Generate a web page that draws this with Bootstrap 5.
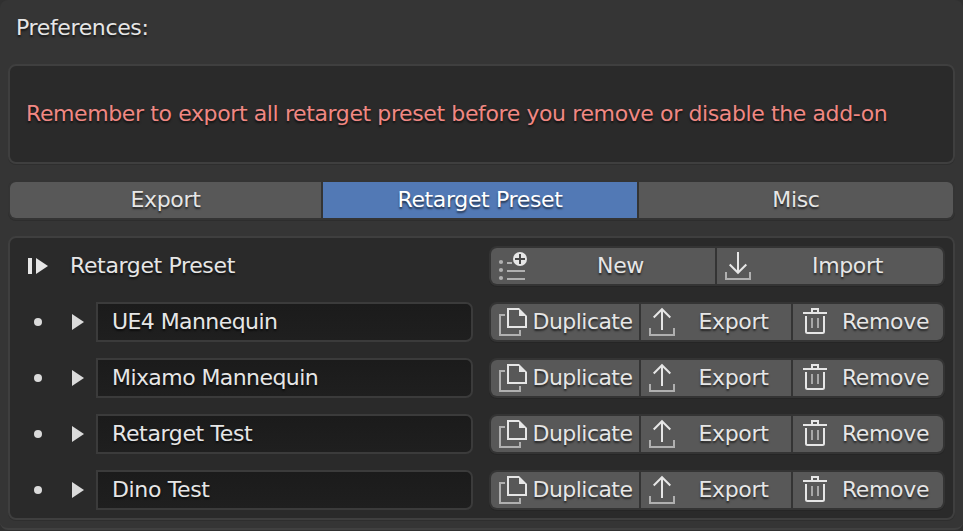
<!DOCTYPE html>
<html lang="en" data-bs-theme="dark">
<head>
<meta charset="utf-8">
<meta name="viewport" content="width=device-width, initial-scale=1">
<title>Preferences</title>
<link href="https://cdn.jsdelivr.net/npm/bootstrap@5.3.0/dist/css/bootstrap.min.css" rel="stylesheet">
<style>
  html, body { height: 100%; }
  body {
    background: #303030; color: #e6e6e6; overflow: hidden;
    font-family: "DejaVu Sans", sans-serif; font-size: 22px; line-height: 36px; letter-spacing: -.36px;
    text-shadow: 0 2px 2px rgba(0,0,0,.6);
  }
  .prefs { height: 530px; padding: 0 8px; background: #353535; border-bottom: 2px solid #404040; border-radius: 8px; }
  .prefs-title { height: 64px; padding: 10px 8px 0; font-size: inherit; font-weight: 400; line-height: 36px; color: inherit; }
  .panel { background: #2a2a2a; border: 2px solid #3f3f3f; border-radius: 8px; box-shadow: 0 1px 0 #2e2e2e; }
  .notice { height: 100px; padding: 0 16px; color: #f18883; letter-spacing: -.388px; white-space: nowrap; }
  .strip { background: #343434; border: 2px solid #343434; border-radius: 8px; gap: 2px; box-shadow: 0 1px 0 #252525; }
  .tool {
    height: 36px; padding: 0; border: 0; border-radius: 0; background: #585858; color: #e6e6e6;
    font-size: inherit; line-height: 35px; letter-spacing: -.35px; text-shadow: inherit; white-space: nowrap;
  }
  .tool:hover { background: #656565; color: #fff; }
  .tool:first-child { border-radius: 6px 0 0 6px; }
  .tool:last-child { border-radius: 0 6px 6px 0; }
  .tool.current { background: #5279b5; color: #fff; }
  .tabs { margin: 16px 0; box-shadow: 0 1px 0 #2d2d2d; }
  .tab-item { flex: 0 0 314px; line-height: 34px; }
  .tab-item:first-child { flex-basis: 311px; }
  .presets { height: 284px; padding: 8px; }
  .preset-row { height: 40px; margin-bottom: 16px; }
  .actions { width: 456px; }
  .w-new { width: 224px; } .w-dup { width: 148px; letter-spacing: -.55px; } .w-exp { width: 150px; }
  .glyph { flex: 0 0 34px; width: 34px; height: 36px; overflow: visible; }
  .glyph { fill: none; stroke: #e6e6e6; stroke-width: 2; }
  .mark-icon { flex: 0 0 auto; fill: #dadada; height: 40px; }
  .tool .glyph + span { padding-left: 1px; }
  .name-box {
    width: 377px; height: 40px; padding: 0 14px; line-height: 35px; border: 2px solid #3b3b3b;
    border-radius: 0 7px 7px 0; background: linear-gradient(#1b1b1b, #1f1f1f);
  }
  .snug { letter-spacing: -.58px; }
</style>
<script src="https://cdn.jsdelivr.net/npm/bootstrap@5.3.0/dist/js/bootstrap.bundle.min.js"></script>
</head>
<body>
<svg class="d-none" xmlns="http://www.w3.org/2000/svg">
  <symbol id="i-new" viewBox="0 0 34 36" overflow="visible">
    <g fill="#b0b0b0" stroke="none"><circle cx="10" cy="14" r="2.1"/><circle cx="10" cy="22" r="2.1"/><circle cx="10" cy="30" r="2.1"/></g>
    <path stroke="#b0b0b0" d="M16 15h5M16 23h18M16 31h18"/>
    <circle cx="29" cy="11" r="7" fill="#e6e6e6" stroke="none"/>
    <path stroke="#484848" d="M29 6v10M24 11h10"/>
  </symbol>
  <symbol id="i-import" viewBox="0 0 34 36" overflow="visible">
    <path d="M21 4v21M12.7 16.5 21 24.8l8.3-8.3"/><path stroke="#b0b0b0" d="M9 24v7h24v-7"/>
  </symbol>
  <symbol id="i-export" viewBox="0 0 34 36" overflow="visible">
    <path d="M21 26V5M12.7 13.5 21 5.2l8.3 8.3"/><path stroke="#b0b0b0" d="M9 24v7h24v-7"/>
  </symbol>
  <symbol id="i-dup" viewBox="0 0 34 36" overflow="visible">
    <path stroke="#b0b0b0" d="M14 11H9v20h20v-5"/>
    <path d="M35 12v11H17V5h11"/><path fill="#e6e6e6" stroke="none" d="M28 4l8 8h-8z"/>
  </symbol>
  <symbol id="i-trash" viewBox="0 0 34 36" overflow="visible">
    <path d="M10 9h24M19 8V5h6v3M13 12v15.5q0 1.5 1.500 1.500h15q1.500 0 1.500-1.500V12"/><path stroke="#a8a8a8" d="M19 14v10M25 14v10"/>
  </symbol>
</svg>
<main class="prefs">
  <h1 class="prefs-title m-0">Preferences:</h1>
  <div class="panel notice d-flex align-items-center">Remember to export all retarget preset before you remove or disable the add-on</div>
  <nav class="strip tabs d-flex">
    <button class="btn tool tab-item">Export</button>
    <button class="btn tool tab-item current">Retarget Preset</button>
    <button class="btn tool tab-item">Misc</button>
  </nav>
  <section class="panel presets">
    <div class="preset-row d-flex align-items-center">
      <svg class="mark-icon" width="52" viewBox="0 0 52 40"><path fill="#e6e6e6" d="M10 12h4v16h-4zM18 12l12 8-12 8z"/></svg>
      <span class="flex-grow-1 lh-1">Retarget Preset</span>
      <div class="strip actions d-flex">
        <button class="btn tool w-new d-flex"><svg class="glyph"><use href="#i-new"/></svg><span class="flex-grow-1">New</span></button>
        <button class="btn tool flex-grow-1 d-flex"><svg class="glyph"><use href="#i-import"/></svg><span class="flex-grow-1">Import</span></button>
      </div>
    </div>
    <div class="preset-row d-flex">
      <svg class="mark-icon" width="78" viewBox="0 0 78 40"><circle cx="20" cy="20" r="4"/><path d="M54 12l12 8-12 8z"/></svg>
      <div class="name-box snug">UE4 Mannequin</div>
      <div class="strip actions d-flex ms-auto">
        <button class="btn tool w-dup d-flex"><svg class="glyph"><use href="#i-dup"/></svg><span class="flex-grow-1">Duplicate</span></button>
        <button class="btn tool w-exp d-flex"><svg class="glyph"><use href="#i-export"/></svg><span class="flex-grow-1">Export</span></button>
        <button class="btn tool w-exp d-flex"><svg class="glyph"><use href="#i-trash"/></svg><span class="flex-grow-1">Remove</span></button>
      </div>
    </div>
    <div class="preset-row d-flex">
      <svg class="mark-icon" width="78" viewBox="0 0 78 40"><circle cx="20" cy="20" r="4"/><path d="M54 12l12 8-12 8z"/></svg>
      <div class="name-box snug">Mixamo Mannequin</div>
      <div class="strip actions d-flex ms-auto">
        <button class="btn tool w-dup d-flex"><svg class="glyph"><use href="#i-dup"/></svg><span class="flex-grow-1">Duplicate</span></button>
        <button class="btn tool w-exp d-flex"><svg class="glyph"><use href="#i-export"/></svg><span class="flex-grow-1">Export</span></button>
        <button class="btn tool w-exp d-flex"><svg class="glyph"><use href="#i-trash"/></svg><span class="flex-grow-1">Remove</span></button>
      </div>
    </div>
    <div class="preset-row d-flex">
      <svg class="mark-icon" width="78" viewBox="0 0 78 40"><circle cx="20" cy="20" r="4"/><path d="M54 12l12 8-12 8z"/></svg>
      <div class="name-box">Retarget Test</div>
      <div class="strip actions d-flex ms-auto">
        <button class="btn tool w-dup d-flex"><svg class="glyph"><use href="#i-dup"/></svg><span class="flex-grow-1">Duplicate</span></button>
        <button class="btn tool w-exp d-flex"><svg class="glyph"><use href="#i-export"/></svg><span class="flex-grow-1">Export</span></button>
        <button class="btn tool w-exp d-flex"><svg class="glyph"><use href="#i-trash"/></svg><span class="flex-grow-1">Remove</span></button>
      </div>
    </div>
    <div class="preset-row d-flex mb-0">
      <svg class="mark-icon" width="78" viewBox="0 0 78 40"><circle cx="20" cy="20" r="4"/><path d="M54 12l12 8-12 8z"/></svg>
      <div class="name-box">Dino Test</div>
      <div class="strip actions d-flex ms-auto">
        <button class="btn tool w-dup d-flex"><svg class="glyph"><use href="#i-dup"/></svg><span class="flex-grow-1">Duplicate</span></button>
        <button class="btn tool w-exp d-flex"><svg class="glyph"><use href="#i-export"/></svg><span class="flex-grow-1">Export</span></button>
        <button class="btn tool w-exp d-flex"><svg class="glyph"><use href="#i-trash"/></svg><span class="flex-grow-1">Remove</span></button>
      </div>
    </div>
  </section>
</main>
</body>
</html>
